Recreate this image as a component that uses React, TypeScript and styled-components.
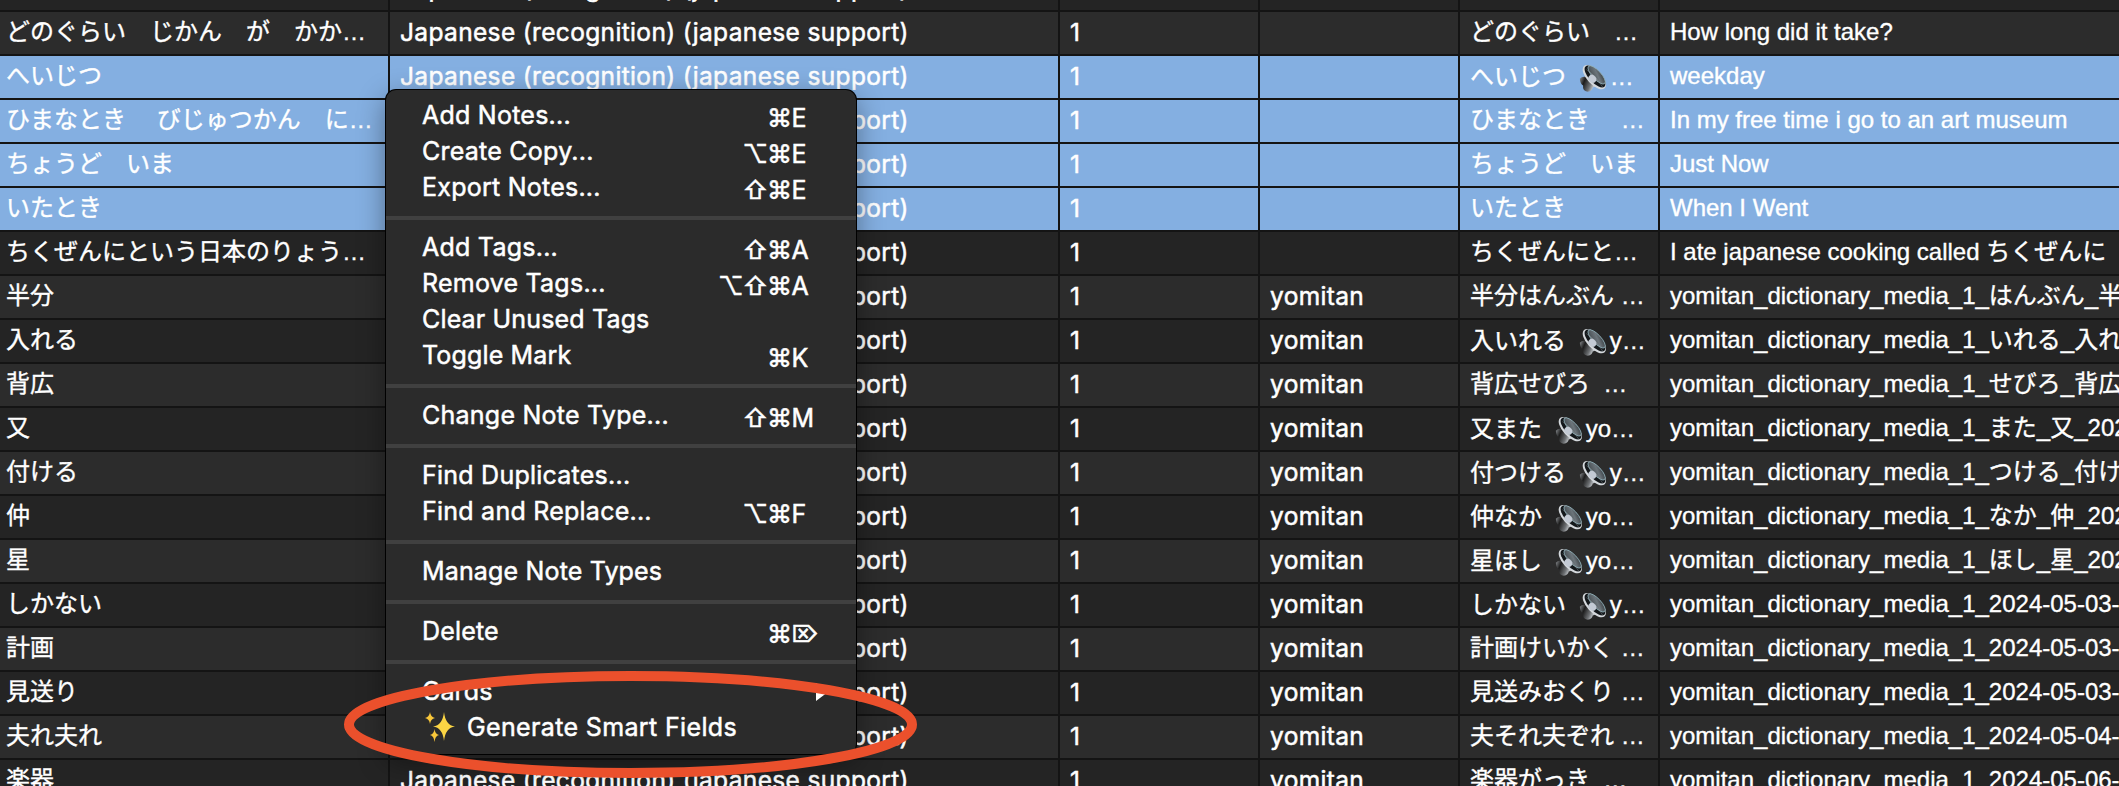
import React from 'react';
import styled, { createGlobalStyle } from 'styled-components';

const GlobalStyle = createGlobalStyle`
  * { box-sizing: border-box; }
  body { margin: 0; background: #141414; overflow: hidden; }
`;

const sans = `Inter, 'Noto Sans CJK JP', sans-serif`;
const arial = `'Liberation Sans', 'Noto Sans CJK JP', sans-serif`;

const Screen = styled.main`
  position: relative;
  width: 2119px;
  height: 786px;
  overflow: hidden;
  background: #141414;
  color: #fff;
`;

const Table = styled.div`
  display: flex;
  flex-direction: column;
  margin-top: -32px;
`;

const Row = styled.div<{ $tone: 'dark' | 'light' | 'selected' }>`
  display: grid;
  grid-template-columns: 388px 668px 198px 198px 198px 459px;
  column-gap: 2px;
  height: 42px;
  flex: none;
  margin-bottom: 2px;
  & > div {
    background: ${(p) => (p.$tone === 'selected' ? '#84afe1' : p.$tone === 'light' ? '#2c2c2c' : '#242424')};
  }
`;

const Cell = styled.div<{ $line?: number }>`
  display: flex;
  padding-left: 10px;
  font: 400 24px/${(p) => p.$line ?? 40}px ${arial};
  -webkit-text-stroke: 0.35px #fff;
  white-space: pre;
  overflow: hidden;
`;

const FieldCell = styled(Cell)`
  padding-left: 6px;
`;

const UiCell = styled(Cell)`
  font: 400 24.5px/41px ${sans};
  letter-spacing: 0.35px;
  -webkit-text-stroke: 0.5px #fff;
`;

const Speaker = styled.svg`
  width: 28px;
  height: 27px;
  margin: 9px 3px 0 6px;
  flex: none;
`;

const Menu = styled.nav`
  position: absolute;
  left: 386px;
  top: 90px;
  width: 470px;
  height: 664px;
  padding: 8px 0;
  border-radius: 10px;
  background: #2b2b2b;
  box-shadow: 0 0 0 1px #000, 0 8px 28px rgba(0, 0, 0, 0.4);
`;

const Item = styled.div`
  display: flex;
  align-items: center;
  height: 36px;
  padding: 0 36px;
  font: 400 25px/36px ${sans};
  -webkit-text-stroke: 0.5px #fff;
  white-space: pre;
`;

const Label = styled.span<{ $spacing: number }>`
  flex: 1;
  display: flex;
  align-items: center;
  margin-top: -2px;
  letter-spacing: ${(p) => p.$spacing}px;
`;

const Keys = styled.span`
  display: grid;
  grid-auto-flow: column;
  grid-auto-columns: 24.5px;
  margin: 3px 4px 0 0;
`;

const Key = styled.span<{ $small: boolean }>`
  font-size: ${(p) => (p.$small ? 22.5 : 25)}px;
`;

const Separator = styled.hr`
  height: 4px;
  margin: 10px 0;
  border: 0;
  background: #404040;
`;

const Sparkle = styled.svg`
  width: 30px;
  height: 32px;
  margin: 0 12px 0 3px;
`;

const Arrow = styled.svg`
  width: 12px;
  height: 18px;
  margin-right: -8px;
`;

const Highlight = styled.svg`
  position: absolute;
  left: 340px;
  top: 668px;
  width: 582px;
  height: 114px;
`;

function SpeakerIcon({ id }: { id: string }) {
  return (
    <Speaker viewBox="0 0 84 82">
      <defs>
        <linearGradient id={id + 'm'} x1="0" y1="0" x2="1" y2="1">
          <stop offset="0" stopColor="#3c4347" />
          <stop offset="0.55" stopColor="#6c757b" />
          <stop offset="1" stopColor="#2b3034" />
        </linearGradient>
        <linearGradient id={id + 'b'} x1="0" y1="0" x2="1" y2="0.4">
          <stop offset="0" stopColor="#8b8f93" />
          <stop offset="0.35" stopColor="#1c1c1c" />
          <stop offset="0.75" stopColor="#6d7073" />
          <stop offset="1" stopColor="#c8ccd0" />
        </linearGradient>
      </defs>
      <path d="M2 42 Q8 34 20 36 L50 62 Q46 68 41 68 Q40 78 26 81 Q14 80 12 70 L12 62 Q3 58 2 42 Z" fill={`url(#${id}b)`} />
      <ellipse cx="46" cy="37" rx="22" ry="46" transform="rotate(-43 46 37)" fill="#d4d8dc" />
      <ellipse cx="48" cy="35" rx="18" ry="42" transform="rotate(-43 48 35)" fill="#14181b" />
      <ellipse cx="53" cy="30" rx="13" ry="36" transform="rotate(-43 53 30)" fill={`url(#${id}m)`} stroke="#8fb0ba" strokeWidth="2.5" />
      <ellipse cx="40" cy="42" rx="11" ry="13" transform="rotate(-43 40 42)" fill="#c3cad4" />
      <path d="M22 14 Q48 30 72 68" fill="none" stroke="#aeb6bb" strokeWidth="2" opacity=".5" />
    </Speaker>
  );
}

type RowData = { a: string; b: string; audio?: string; c: string; tag?: boolean; sel?: boolean };

const Y = 'yomitan_dictionary_media_1_';
const rows: RowData[] = [
  { a: '', b: '', c: '' },
  { a: 'どのぐらい　じかん　が　かか…', b: 'どのぐらい　…', c: 'How long did it take?' },
  { a: 'へいじつ', b: 'へいじつ ', audio: '…', c: 'weekday', sel: true },
  { a: 'ひまなとき　 びじゅつかん　に…', b: 'ひまなとき　 …', c: 'In my free time i go to an art museum', sel: true },
  { a: 'ちょうど　いま', b: 'ちょうど　いま', c: 'Just Now', sel: true },
  { a: 'いたとき', b: 'いたとき', c: 'When I Went', sel: true },
  { a: 'ちくぜんにという日本のりょう…', b: 'ちくぜんにと…', c: 'I ate japanese cooking called ちくぜんに' },
  { a: '半分', b: '半分はんぶん …', c: Y + 'はんぶん_半分', tag: true },
  { a: '入れる', b: '入いれる ', audio: 'y…', c: Y + 'いれる_入れる', tag: true },
  { a: '背広', b: '背広せびろ  …', c: Y + 'せびろ_背広', tag: true },
  { a: '又', b: '又また ', audio: 'yo…', c: Y + 'また_又_2024', tag: true },
  { a: '付ける', b: '付つける ', audio: 'y…', c: Y + 'つける_付ける', tag: true },
  { a: '仲', b: '仲なか ', audio: 'yo…', c: Y + 'なか_仲_2024', tag: true },
  { a: '星', b: '星ほし ', audio: 'yo…', c: Y + 'ほし_星_2024', tag: true },
  { a: 'しかない', b: 'しかない ', audio: 'y…', c: Y + '2024-05-03-', tag: true },
  { a: '計画', b: '計画けいかく …', c: Y + '2024-05-03-', tag: true },
  { a: '見送り', b: '見送みおくり …', c: Y + '2024-05-03-', tag: true },
  { a: '夫れ夫れ', b: '夫それ夫ぞれ …', c: Y + '2024-05-04-', tag: true },
  { a: '楽器', b: '楽器がっき  …', c: Y + '2024-05-06-', tag: true },
];

const groups: [string, string][][] = [
  [['Add Notes...', '⌘E'], ['Create Copy...', '⌥⌘E'], ['Export Notes...', '⇧⌘E']],
  [['Add Tags...', '⇧⌘A'], ['Remove Tags...', '⌥⇧⌘A'], ['Clear Unused Tags', ''], ['Toggle Mark', '⌘K']],
  [['Change Note Type...', '⇧⌘M']],
  [['Find Duplicates...', ''], ['Find and Replace...', '⌥⌘F']],
  [['Manage Note Types', '']],
  [['Delete', '⌘⌦']],
  [['Cards', '>'], ['Generate Smart Fields', '']],
];

export default function App() {
  return (
    <Screen>
      <GlobalStyle />
      <Table>
        {rows.map((r, i) => (
          <Row key={i} $tone={r.sel ? 'selected' : i % 2 ? 'light' : 'dark'}>
            <FieldCell $line={39}>{r.a}</FieldCell>
            <UiCell>Japanese (recognition) (japanese support)</UiCell>
            <UiCell>1</UiCell>
            <UiCell>{r.tag ? 'yomitan' : ''}</UiCell>
            <Cell $line={r.audio ? 41 : 39}>
              {r.b}
              {r.audio && <SpeakerIcon id={'s' + i} />}
              {r.audio}
            </Cell>
            <Cell>{r.c}</Cell>
          </Row>
        ))}
      </Table>
      <Menu>
        {groups.map((g, i) => (
          <React.Fragment key={i}>
            {i > 0 && <Separator />}
            {g.map(([label, keys]) => (
              <Item key={label}>
                <Label $spacing={label.startsWith('Generate') ? 0.36 : label.endsWith('...') ? 0.24 : 0.16}>
                  {label.startsWith('Generate') && (
                    <Sparkle viewBox="0 0 30 32">
                      <path d="M19 1 Q20.5 14.5 30 15.5 Q20.5 16.5 19 30 Q17.5 16.5 8 15.5 Q17.5 14.5 19 1Z" fill="#fbd544" />
                      <path d="M5 1 Q5.6 6 10 7 Q5.6 8 5 13 Q4.4 8 0 7 Q4.4 6 5 1Z" fill="#f8c63a" />
                      <path d="M9.500 18 Q10 23 14 24 Q10 25 9.500 31 Q9 25 5 24 Q9 23 9.500 18Z" fill="#f8c63a" />
                    </Sparkle>
                  )}
                  {label}
                </Label>
                {keys === '>' ? (
                  <Arrow viewBox="0 0 12 18">
                    <path d="M0 0 L12 9 L0 18Z" fill="#fff" />
                  </Arrow>
                ) : (
                  <Keys>{[...keys].map((k) => <Key key={k} $small={k === '⌦'}>{k}</Key>)}</Keys>
                )}
              </Item>
            ))}
          </React.Fragment>
        ))}
      </Menu>
      <Highlight viewBox="0 0 582 114">
        <ellipse cx="290.5" cy="56.5" rx="281.5" ry="48.5" fill="none" stroke="#eb502c" strokeWidth="10" />
      </Highlight>
    </Screen>
  );
}
